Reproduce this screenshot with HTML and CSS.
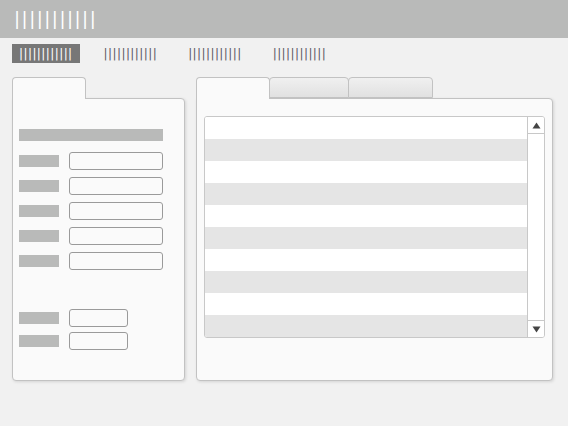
FILE: index.html
```html
<!DOCTYPE html>
<html>
<head>
<meta charset="utf-8">
<link rel="stylesheet" href="styles.css">
</head>
<body>
<header class="topbar"><span class="title">|||||||||||</span></header>
<nav class="nav">
  <span class="nav-item active">||||||||||||</span>
  <span class="nav-item">||||||||||||</span>
  <span class="nav-item">||||||||||||</span>
  <span class="nav-item">||||||||||||</span>
</nav>
<main class="main">
  <section class="panel left">
    <div class="tabs"><div class="tab active"></div></div>
    <div class="panel-body form">
      <div class="heading"></div>
      <div class="rows">
        <div class="row"><span class="label"></span><span class="input"></span></div>
        <div class="row"><span class="label"></span><span class="input"></span></div>
        <div class="row"><span class="label"></span><span class="input"></span></div>
        <div class="row"><span class="label"></span><span class="input"></span></div>
        <div class="row"><span class="label"></span><span class="input"></span></div>
      </div>
      <div class="rows small">
        <div class="row"><span class="label"></span><span class="input short"></span></div>
        <div class="row"><span class="label"></span><span class="input short"></span></div>
      </div>
    </div>
  </section>
  <section class="panel right">
    <div class="tabs">
      <div class="tab active"></div>
      <div class="tab t2"></div>
      <div class="tab t3"></div>
    </div>
    <div class="panel-body listwrap">
      <div class="list">
        <div class="rowsbox">
          <div class="lrow"></div><div class="lrow alt"></div>
          <div class="lrow"></div><div class="lrow alt"></div>
          <div class="lrow"></div><div class="lrow alt"></div>
          <div class="lrow"></div><div class="lrow alt"></div>
          <div class="lrow"></div><div class="lrow alt"></div>
        </div>
        <div class="scrollbar">
          <div class="sbtn up"><svg width="9" height="7" viewBox="0 0 9 7"><path d="M4.5 0.5 L8.5 6.5 L0.5 6.5 Z" fill="#444"/></svg></div>
          <div class="track"></div>
          <div class="sbtn down"><svg width="9" height="7" viewBox="0 0 9 7"><path d="M0.5 0.5 L8.5 0.5 L4.5 6.5 Z" fill="#444"/></svg></div>
        </div>
      </div>
    </div>
  </section>
</main>
</body>
</html>
```

FILE: styles.css
```css
html, body {
  margin: 0;
  padding: 0;
  background: #f1f1f1;
  font-family: "DejaVu Sans", sans-serif;
  width: 568px;
  height: 426px;
  overflow: hidden;
}
.topbar {
  height: 38px;
  background: #b9bab9;
  display: flex;
  align-items: center;
  padding-left: 14px;
}
.title {
  color: #fff;
  font-size: 18px;
  letter-spacing: 1.5px;
  line-height: 18px;
}
.nav {
  display: flex;
  gap: 17px;
  margin: 6px 0 0 12px;
  height: 19px;
}
.nav-item {
  display: flex;
  align-items: center;
  padding: 0 7px;
  font-size: 12px;
  line-height: 12px;
  letter-spacing: 0.42px;
  color: #5a5a64;
  height: 19px;
}
.nav-item.active {
  background: #777777;
  color: #fff;
}
.main {
  display: flex;
  gap: 11px;
  margin: 14px 0 0 12px;
}
.panel {
  display: flex;
  flex-direction: column;
}
.panel.left { width: 173px; }
.panel.right { width: 357px; }
.tabs {
  display: flex;
  height: 21px;
  position: relative;
  z-index: 2;
}
.tab {
  box-sizing: border-box;
  border: 1px solid #c2c2c2;
  border-bottom: none;
  border-radius: 4px 4px 0 0;
  height: 22px;
}
.tab.active {
  width: 74px;
  background: #fafafa;
}
.tab.t2, .tab.t3 {
  height: 21px;
  margin-top: 0;
  background: linear-gradient(#f0f0f0, #e1e1e1);
  border-bottom: 1px solid #c2c2c2;
  margin-left: -1px;
}
.tab.t2 { width: 80px; }
.tab.t3 { width: 85px; }
.panel-body {
  box-sizing: border-box;
  height: 283px;
  background: #fafafa;
  border: 1px solid #c2c2c2;
  border-radius: 0 4px 4px 4px;
  box-shadow: 1px 1px 3px rgba(0,0,0,0.12);
}
.form {
  padding: 30px 6px 0 6px;
}
.heading {
  width: 144px;
  height: 12px;
  background: #b9bab9;
}
.rows {
  display: flex;
  flex-direction: column;
  gap: 7px;
  margin-top: 11px;
}
.rows.small {
  gap: 5px;
  margin-top: 39px;
}
.row {
  display: flex;
  align-items: center;
  gap: 10px;
  height: 18px;
}
.label {
  width: 40px;
  height: 12px;
  background: #b9bab9;
}
.input {
  box-sizing: border-box;
  width: 94px;
  height: 18px;
  border: 1px solid #9a9a9a;
  border-radius: 3px;
  background: #fafafa;
}
.input.short { width: 59px; }
.listwrap {
  padding: 17px 7px 0 7px;
}
.list {
  box-sizing: border-box;
  display: flex;
  width: 341px;
  height: 222px;
  border: 1px solid #c8c8c8;
  border-radius: 3px;
  overflow: hidden;
  background: #fff;
}
.rowsbox {
  flex: 1;
  display: flex;
  flex-direction: column;
}
.lrow {
  height: 22px;
  background: #ffffff;
}
.lrow.alt { background: #e5e5e5; }
.scrollbar {
  box-sizing: border-box;
  width: 17px;
  border-left: 1px solid #c8c8c8;
  display: flex;
  flex-direction: column;
  background: #fff;
}
.sbtn {
  height: 17px;
  display: flex;
  align-items: center;
  justify-content: center;
  box-sizing: border-box;
}
.sbtn.up { border-bottom: 1px solid #c8c8c8; }
.sbtn.down { border-top: 1px solid #c8c8c8; }
.track { flex: 1; }
```
